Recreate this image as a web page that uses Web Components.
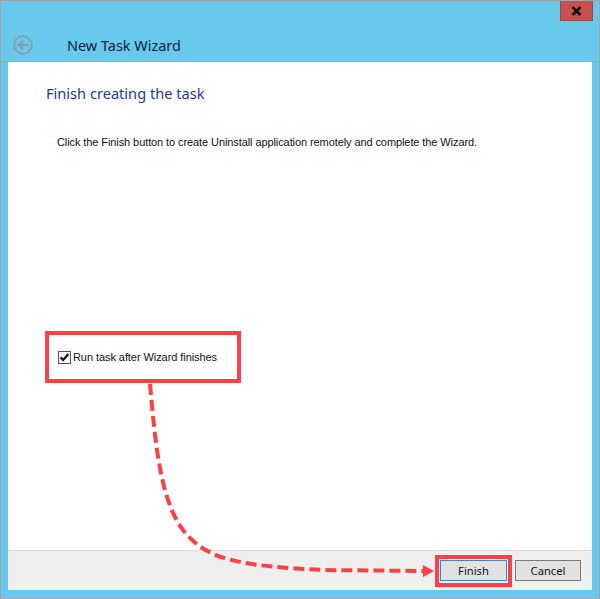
<!DOCTYPE html>
<html lang="en">
<head>
<meta charset="utf-8">
<title>New Task Wizard</title>
<style>
  html, body { margin: 0; padding: 0; background: #68c9ec; }
  body { width: 600px; height: 599px; overflow: hidden; }
</style>
</head>
<body>
<wizard-window>
  <span slot="title">New Task Wizard</span>
  <span slot="heading">Finish creating the task</span>
  <span slot="message">Click the Finish button to create Uninstall application remotely and complete the Wizard.</span>
  <wizard-check slot="option">Run task after Wizard finishes</wizard-check>
  <wizard-button slot="actions" focused>Finish</wizard-button>
  <wizard-button slot="actions">Cancel</wizard-button>
</wizard-window>
<wizard-callouts></wizard-callouts>

<script>
class WizardWindow extends HTMLElement {
  constructor() {
    super();
    this.attachShadow({ mode: "open" });
    this.shadowRoot.innerHTML = `
      <style>
        :host {
          display: flex;
          flex-direction: column;
          box-sizing: border-box;
          width: 600px;
          height: 599px;
          border: 1px solid #a3a6ab;
          background: #68c9ec;
          font-family: "Noto Sans", sans-serif;
        }
        .caption {
          height: 20px;
          display: flex;
          justify-content: flex-end;
          padding-right: 6px;
        }
        .close {
          width: 33px;
          height: 20px;
          box-sizing: border-box;
          background: #c75050;
          border: 1px solid #9a4a44;
          border-top: 0;
          display: flex;
          align-items: center;
          justify-content: center;
        }
        .title-row {
          height: 41px;
          display: flex;
          align-items: center;
          padding: 8px 0 0 12px;
          box-sizing: border-box;
          border-bottom: 1px solid #8fb1c4;
          margin: 0 -1px 0 0;
        }
        .back { width: 20px; height: 20px; display: block; }
        .title {
          margin-left: 34px;
          font-size: 14.45px;
          color: #10243a;
        }
        .body {
          flex: 1;
          margin: 0 7px 8px;
          display: flex;
          flex-direction: column;
          background: #fff;
        }
        .page {
          flex: 1;
          display: flex;
          flex-direction: column;
          padding: 0 0 0 38px;
        }
        .heading {
          margin-top: 20px;
          font-size: 14.6px;
          line-height: 22px;
          color: #1a3aa0;
        }
        .message {
          margin: 31px 0 0 11px;
          font-family: "Liberation Sans", sans-serif;
          font-size: 11px;
          letter-spacing: -0.09px;
          line-height: 14px;
          color: #111;
        }
        .option {
          margin-top: auto;
          margin-bottom: 186px;
          padding-left: 12px;
        }
        .footer {
          height: 40px;
          box-sizing: border-box;
          background: #efefef;
          border-top: 1px solid #dcdcdc;
          display: flex;
          justify-content: flex-end;
          align-items: flex-start;
          gap: 8px;
          padding: 9px 11px 0 0;
        }
      </style>
      <div class="caption">
        <div class="close">
          <svg width="11" height="10" viewBox="0 0 11 10"><path d="M1.5 1 9.5 9M9.5 1 1.5 9" stroke="#111" stroke-width="2.6" fill="none"/></svg>
        </div>
      </div>
      <div class="title-row">
        <svg class="back" viewBox="0 0 20 20">
          <circle cx="10" cy="10" r="8.8" fill="none" stroke="#8e9aa6" stroke-width="1.7"/>
          <path d="M15 10H6M9.8 6 5.8 10l4 4" fill="none" stroke="#8e9aa6" stroke-width="2.2"/>
        </svg>
        <div class="title"><slot name="title"></slot></div>
      </div>
      <div class="body">
        <div class="page">
          <div class="heading"><slot name="heading"></slot></div>
          <div class="message"><slot name="message"></slot></div>
          <div class="option"><slot name="option"></slot></div>
        </div>
        <div class="footer"><slot name="actions"></slot></div>
      </div>
    `;
  }
}

class WizardCheck extends HTMLElement {
  constructor() {
    super();
    this.attachShadow({ mode: "open" });
    this.shadowRoot.innerHTML = `
      <style>
        :host {
          display: flex;
          align-items: center;
          gap: 2px;
          font-family: "Liberation Sans", sans-serif;
          font-size: 11px;
          letter-spacing: -0.07px;
          color: #111;
          height: 14px;
        }
        .box {
          width: 13px;
          height: 13px;
          box-sizing: border-box;
          border: 1px solid #555;
          background: #f4f4f4;
          display: block;
          overflow: visible;
        }
      </style>
      <svg class="box" viewBox="0 0 11 11"><path d="M1.6 5.4 4.2 8 9.4 2" fill="none" stroke="#111" stroke-width="2.2"/></svg>
      <span><slot></slot></span>
    `;
  }
}

class WizardButton extends HTMLElement {
  constructor() {
    super();
    this.attachShadow({ mode: "open" });
    this.shadowRoot.innerHTML = `
      <style>
        :host {
          display: flex;
          align-items: center;
          justify-content: center;
          box-sizing: border-box;
          width: 66px;
          height: 21px;
          background: #e1e1e1;
          border: 1px solid #777;
          font-family: "Noto Sans", sans-serif;
          font-size: 11.2px;
          color: #111;
        }
        :host([focused]) {
          width: 67px;
          border-color: #3c87bd;
        }
      </style>
      <slot></slot>
    `;
  }
}

// the red marks drawn over the screenshot, nothing under them is clickable
class WizardCallouts extends HTMLElement {
  constructor() {
    super();
    this.attachShadow({ mode: "open" });
    this.shadowRoot.innerHTML = `
      <style>
        :host { position: absolute; left: 0; top: 0; width: 600px; height: 599px; pointer-events: none; }
        svg { display: block; }
      </style>
      <svg width="600" height="599" viewBox="0 0 600 599">
        <g fill="none" stroke="#fd3f47">
          <rect x="47" y="333" width="192" height="48" stroke-width="4"/>
          <rect x="437" y="557" width="73" height="28" stroke-width="4"/>
          <path d="M150 384C155 440 160 500 183 530S240 566 323 570L424 571" stroke-width="4" stroke-dasharray="11 5"/>
        </g>
        <path d="M423 565 434 571 423 577Z" fill="#fd3f47"/>
      </svg>
    `;
  }
}

customElements.define("wizard-window", WizardWindow);
customElements.define("wizard-check", WizardCheck);
customElements.define("wizard-button", WizardButton);
customElements.define("wizard-callouts", WizardCallouts);
</script>
</body>
</html>
